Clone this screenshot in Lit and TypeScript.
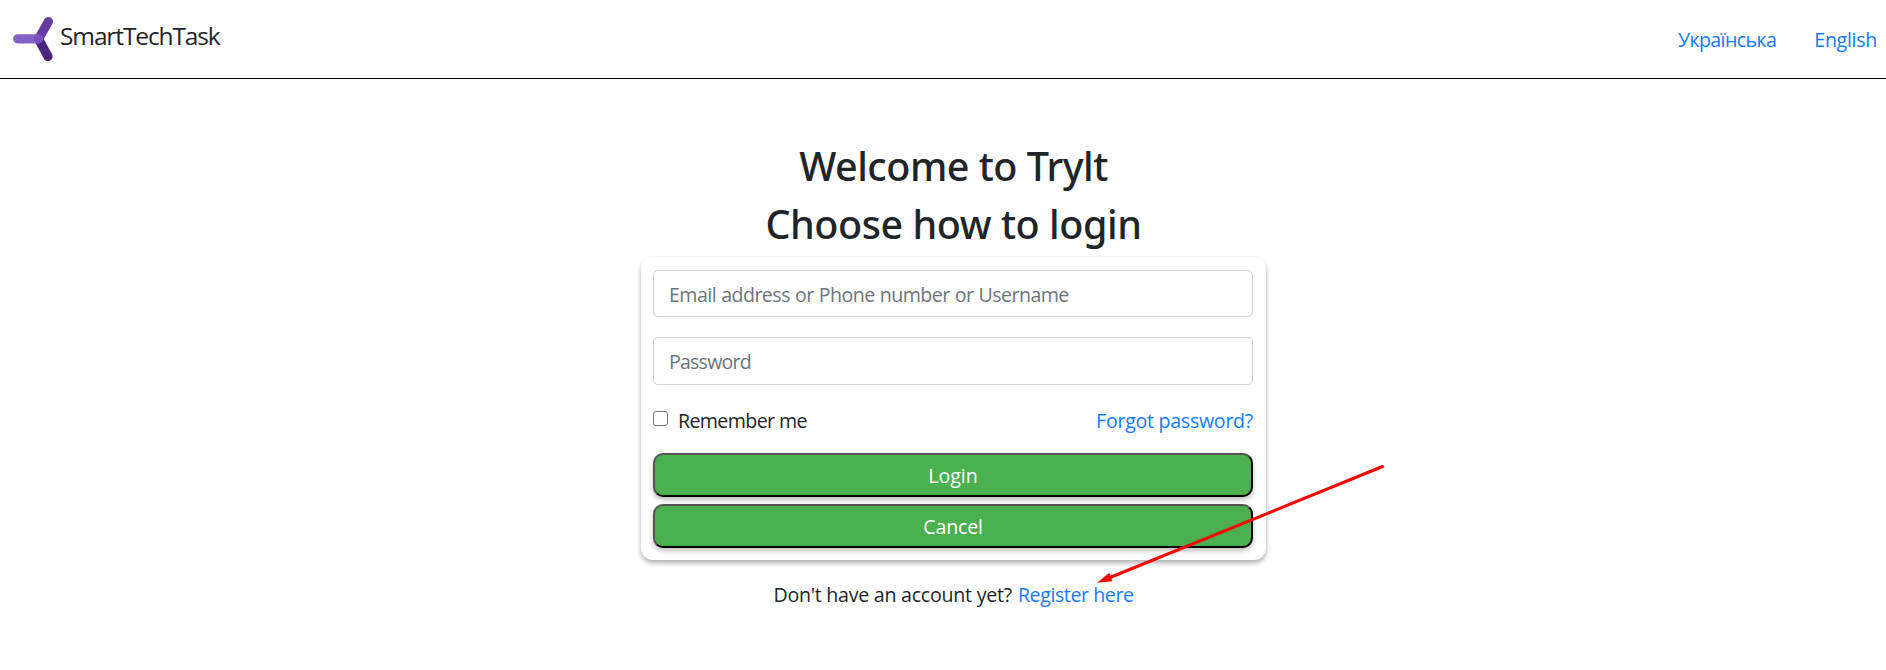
import { LitElement, html, css } from "lit";
import { customElement } from "lit/decorators.js";

@customElement("app-header")
export class AppHeader extends LitElement {
  static styles = css`
    :host { display: block; }
    .bar { display: flex; justify-content: space-between; height: 79px; box-sizing: border-box; border-bottom: 1px solid #000; padding: 0 9px 0 12px; }
    .brand { display: flex; gap: 6px; padding-top: 16px; color: #212529; }
    .brand svg { display: block; }
    .name { font-size: 24.5px; line-height: 40px; letter-spacing: -1.12px; white-space: nowrap; }
    nav { display: flex; gap: 38px; padding-top: 25px; }
    a { color: #167bff; text-decoration: none; line-height: 30px; letter-spacing: -0.3px; }
    a.uk { letter-spacing: -0.6px; }
  `;
  render() {
    return html`
      <header class="bar">
        <div class="brand">
          <svg width="42" height="46" viewBox="12 16 42 46" fill="none" stroke-linecap="round" stroke-width="9.2">
            <path d="M38.5 39L48 56.5" stroke="#472680" />
            <path d="M38.5 39L48.4 21.6" stroke="#643ba0" />
            <path d="M17.7 38.8H38" stroke="#8661c5" />
            <circle cx="38.3" cy="38.8" r="4.6" fill="#7850be" />
          </svg>
          <span class="name">SmartTechTask</span>
        </div>
        <nav><a class="uk">Українська</a><a>English</a></nav>
      </header>
    `;
  }
}

@customElement("login-form")
export class LoginForm extends LitElement {
  static styles = css`
    :host { display: block; }
    .card { display: flex; flex-direction: column; width: 625px; height: 303px; box-sizing: border-box; padding: 13px 13px 0 12px; border-radius: 12px; background: #fff; box-shadow: 0 3px 5px rgba(0, 0, 0, 0.32); }
    input { font: inherit; box-sizing: border-box; }
    .field { width: 600px; height: 47px; padding: 2px 15px 0; border: 1px solid #ced4da; border-radius: 5px; background: #fff; letter-spacing: -0.54px; word-spacing: 0.5px; outline: none; }
    .field::placeholder { color: #6c757d; opacity: 1; }
    .password { height: 48px; margin-top: 20px; padding-top: 0; letter-spacing: -0.8px; }
    .options { display: flex; justify-content: space-between; align-items: center; height: 30px; margin-top: 21px; }
    label { display: flex; align-items: center; gap: 10px; color: #212529; letter-spacing: -0.62px; }
    .check { appearance: none; width: 15px; height: 15px; margin: -5px 0 0; border: 1px solid #767676; border-radius: 3px; background: #fff; }
    .forgot { color: #167bff; letter-spacing: -0.28px; }
    button { font: inherit; width: 600px; height: 44px; box-sizing: border-box; padding: 1px 0 0; border: 2px outset #000; border-radius: 10px; background: #4caf50; color: #fff; box-shadow: 0 3px 5px rgba(0, 0, 0, 0.25); }
    .login { margin-top: 17px; }
    .cancel { margin-top: 7px; letter-spacing: -0.2px; }
  `;
  render() {
    return html`
      <form class="card">
        <input class="field" type="text" placeholder="Email address or Phone number or Username" />
        <input class="field password" type="password" placeholder="Password" />
        <div class="options">
          <label><input class="check" type="checkbox" /><span>Remember me</span></label>
          <a class="forgot">Forgot password?</a>
        </div>
        <button class="login" type="button">Login</button>
        <button class="cancel" type="button">Cancel</button>
      </form>
    `;
  }
}

@customElement("app-root")
export class AppRoot extends LitElement {
  static styles = css`
    :host { display: block; position: relative; height: 670px; overflow: hidden; background: #fff; color: #212529; font-family: "Open Sans", "Noto Sans", sans-serif; font-size: 19.6px; line-height: 30px; }
    main { display: flex; flex-direction: column; align-items: center; padding: 63px 0 0 21px; }
    h1 { margin: 0 0 10px; font-family: "Noto Sans", sans-serif; font-size: 39.5px; line-height: 48px; font-weight: 500; letter-spacing: -0.5px; white-space: nowrap; }
    .sub { letter-spacing: -0.45px; margin-bottom: 9px; }
    .signup { display: flex; gap: 6px; margin: 20px 0 0; }
    .ask { letter-spacing: -0.25px; }
    .register { color: #167bff; letter-spacing: -0.42px; }
    .arrow { position: absolute; left: 1090px; top: 460px; pointer-events: none; }
  `;
  render() {
    return html`
      <app-header></app-header>
      <main>
        <h1>Welcome to Trylt</h1>
        <h1 class="sub">Choose how to login</h1>
        <login-form></login-form>
        <p class="signup"><span class="ask">Don't have an account yet?</span><a class="register">Register here</a></p>
      </main>
      <svg class="arrow" width="300" height="130" viewBox="1090 460 300 130">
        <path d="M1382.5 466.5L1110 577.5" stroke="#f00" stroke-width="3" stroke-linecap="round" />
        <path d="M1097 582.7L1109.3 572.7L1111 577.3L1112.3 581.2Z" fill="#f00" />
      </svg>
    `;
  }
}
